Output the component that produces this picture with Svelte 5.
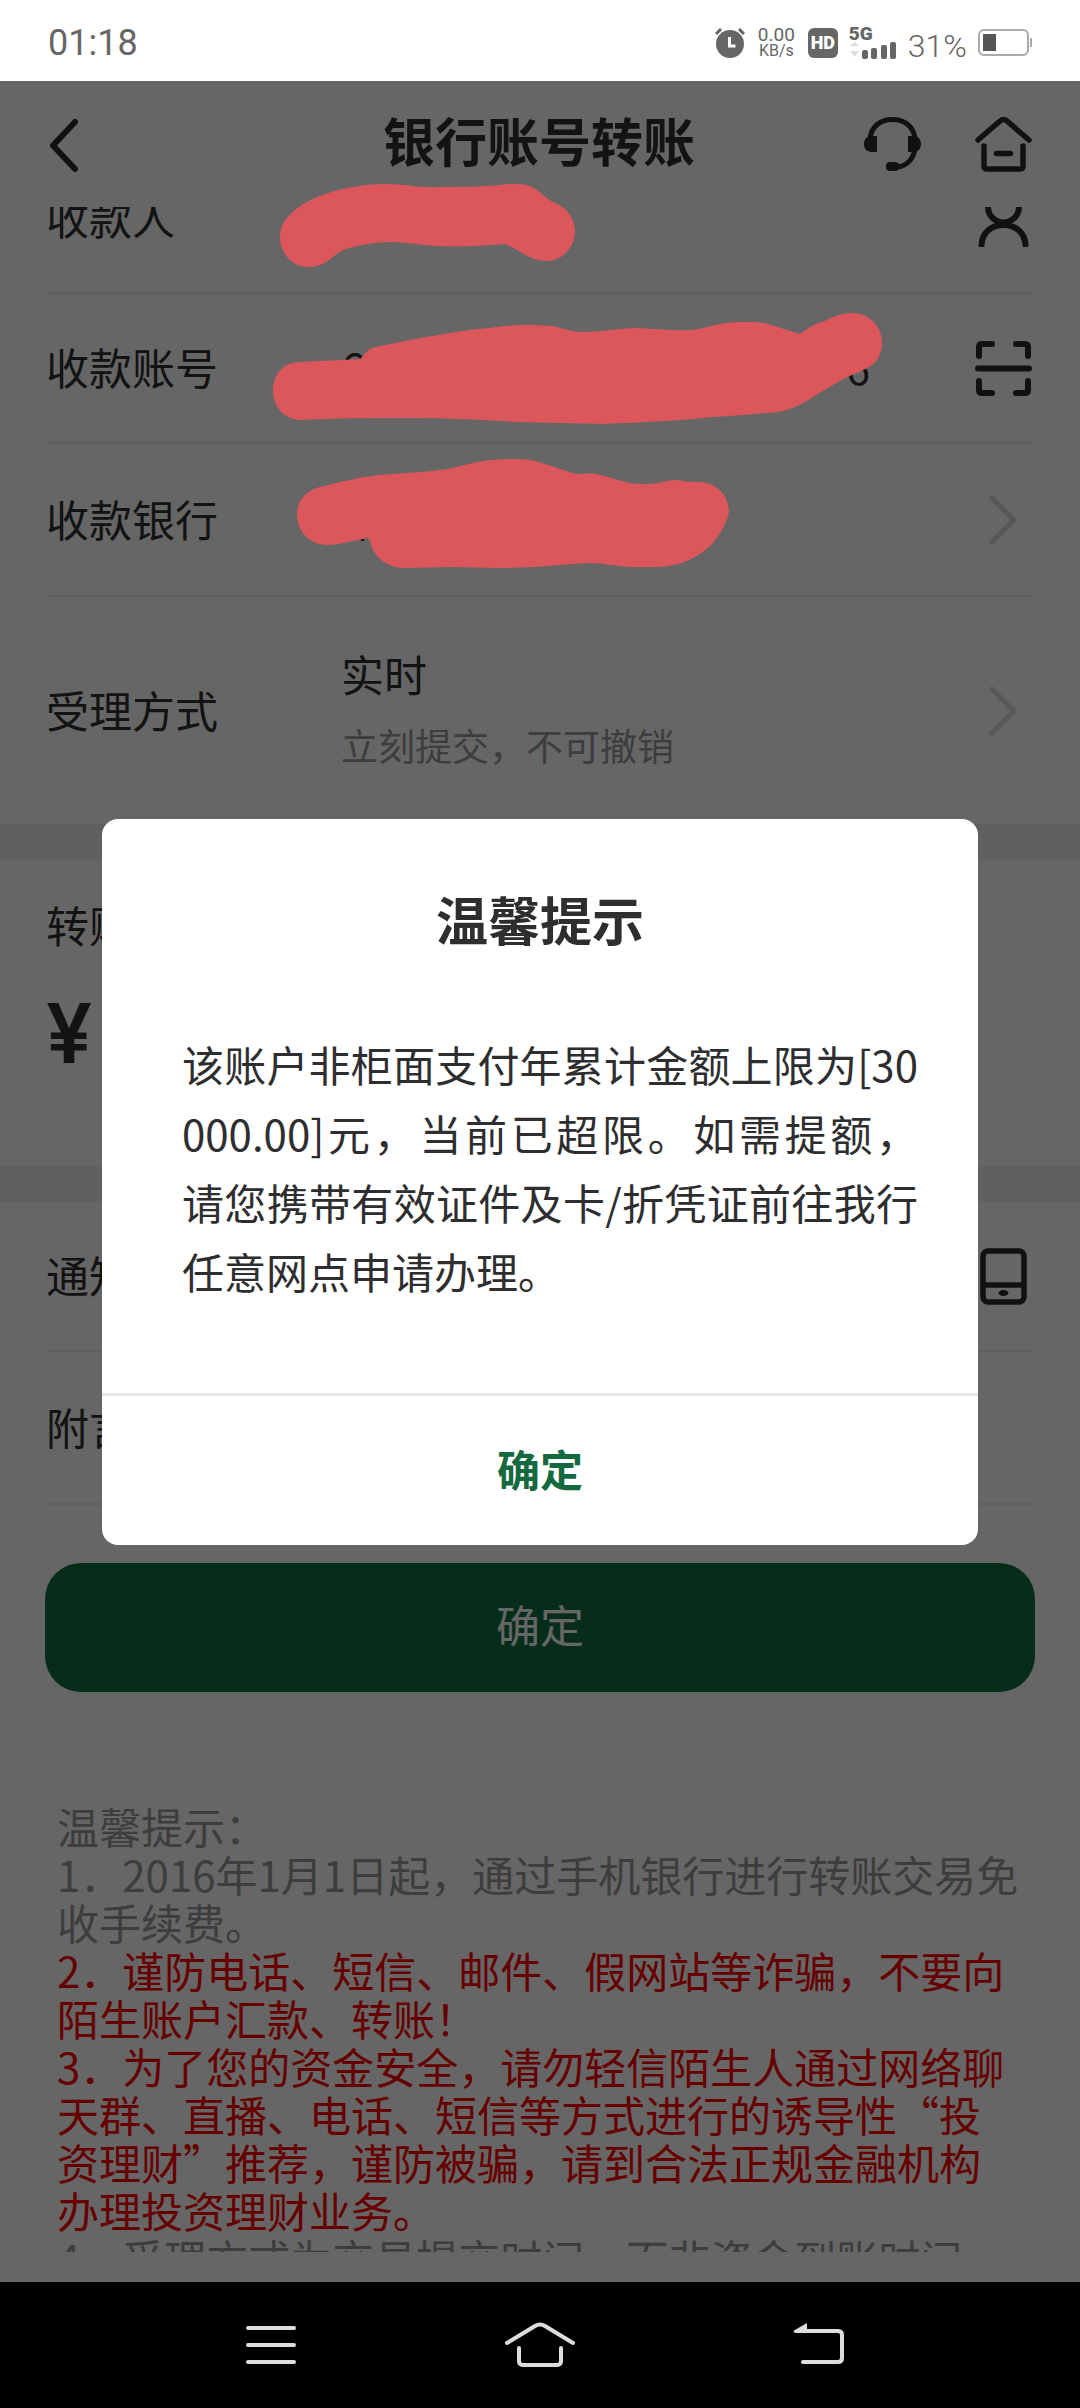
<script lang="ts">
    import { onMount } from "svelte";

    let scroller: HTMLElement;
    let showDialog = $state(true);

    const message = [
        "该账户非柜面支付年累计金额上限为[30",
        "000.00]元，当前已超限。如需提额，",
        "请您携带有效证件及卡/折凭证前往我行",
        "任意网点申请办理。",
    ];

    const tips = [
        { text: "温馨提示：", warn: false },
        { text: "1．2016年1月1日起，通过手机银行进行转账交易免收手续费。", warn: false },
        { text: "2．谨防电话、短信、邮件、假网站等诈骗，不要向陌生账户汇款、转账！", warn: true },
        { text: "3．为了您的资金安全，请勿轻信陌生人通过网络聊天群、直播、电话、短信等方式进行的诱导性“投资理财”推荐，谨防被骗，请到合法正规金融机构办理投资理财业务。", warn: true },
        { text: "4．受理方式为交易提交时间，而非资金到账时间", warn: false },
    ];

    onMount(() => {
        scroller.scrollTop = 63;
    });
</script>

{#snippet chevron()}
    <svg class="icon" viewBox="0 0 57 57" fill="none" stroke="#dcdcdc" stroke-width="5" stroke-linecap="round">
        <path d="M17 7l22 22-22 22" />
    </svg>
{/snippet}

<div class="screen">
    <div class="status">
        <span class="time">01:18</span>
        <div class="status-right">
            <svg class="alarm" viewBox="0 0 30 30" width="30" height="30">
                <circle cx="15" cy="16" r="14" fill="#666" />
                <path d="M1 6l5-5M29 6l-5-5" stroke="#666" stroke-width="3" />
                <path d="M14.500 9v9h6" fill="none" stroke="#fff" stroke-width="3" />
            </svg>
            <div class="speed"><span class="rate">0.00</span><span class="unit">KB/s</span></div>
            <span class="hd">HD</span>
            <div class="signal">
                <span class="net">5G</span>
                <svg viewBox="0 0 48 18" width="48" height="18" fill="#666">
                    <path d="M1 5l4.500-4 4.500 4zM1 10l4.500 6 4.500-6z" fill="#ddd" />
                    <rect x="13" y="9" width="6" height="9" rx="2" />
                    <rect x="22" y="7" width="6" height="11" rx="2" />
                    <rect x="32" y="4" width="6" height="14" rx="2" />
                    <rect x="41" y="1" width="6" height="17" rx="2" />
                </svg>
            </div>
            <span class="percent">31%</span>
            <svg viewBox="0 0 54 28" width="54" height="28">
                <rect x="1" y="1" width="49" height="25" rx="5" fill="none" stroke="#aaa" stroke-width="2" />
                <rect x="5" y="5" width="13" height="17" fill="#555" />
                <rect x="52" y="9" width="2" height="9" fill="#aaa" />
            </svg>
        </div>
    </div>

    <div class="app">
        <header>
            <button class="icon-btn" aria-label="返回">
                <svg class="icon" viewBox="0 0 57 57" fill="none" stroke="#2c2c2c" stroke-width="6" stroke-linecap="round" stroke-linejoin="round">
                    <path d="M29 6L7 29.500 29 53" />
                </svg>
            </button>
            <h1>银行账号转账</h1>
            <div class="actions">
                <button class="icon-btn" aria-label="客服">
                    <svg class="icon" viewBox="0 0 57 57" fill="none" stroke="#2c2c2c" stroke-width="5" stroke-linecap="round">
                        <path d="M6 23C7 11 16 3.500 28.500 3.500S50 11 51 23M51 33c-2 11-9 18-20 18" />
                        <path d="M8 20h5v16H8c-4 0-8-2-8-8s4-8 8-8zM49 20h-5v16h5c4 0 8-2 8-8s-4-8-8-8z" fill="#2c2c2c" stroke="none" />
                        <rect x="22" y="46" width="13" height="9" rx="4" fill="#2c2c2c" stroke="none" />
                    </svg>
                </button>
                <button class="icon-btn" aria-label="首页">
                    <svg class="icon" viewBox="0 0 57 57" fill="none" stroke="#2c2c2c" stroke-width="5.500" stroke-linecap="round" stroke-linejoin="round">
                        <path d="M3 24L25 5q3.500-3 7 0l22 19M9 30v20q0 3 3 3h33q3 0 3-3V30M21.500 37.500h14" />
                    </svg>
                </button>
            </div>
        </header>

        <main bind:this={scroller}>
            <section>
                <div class="row">
                    <span class="label">收款人</span>
                    <svg class="icon" viewBox="0 0 57 57" fill="none" stroke="#2c2c30" stroke-width="6" stroke-linecap="round">
                        <circle cx="28.500" cy="17" r="15.500" />
                        <path d="M6.500 55C7 43 16 35 28.500 35S50 43 50.500 55" />
                    </svg>
                </div>
                <div class="row">
                    <span class="label">收款账号</span>
                    <span class="value account"><span>6</span><span>6</span></span>
                    <svg class="icon" viewBox="0 0 57 57" fill="none" stroke="#2c2c2c" stroke-width="6" stroke-linecap="round" stroke-linejoin="round">
                        <path d="M4 16V7q0-3 3-3h10M41 4h9q3 0 3 3v9M4 41v9q0 3 3 3h10M41 53h9q3 0 3-3v-9M3 28.500h51" />
                    </svg>
                </div>
                <div class="row tall">
                    <span class="label">收款银行</span>
                    <span class="value">中</span>
                    {@render chevron()}
                </div>
                <div class="row method">
                    <span class="label">受理方式</span>
                    <span class="value">实时<small>立刻提交，不可撤销</small></span>
                    {@render chevron()}
                </div>
            </section>

            <section class="amount">
                <span class="label">转账金额</span>
                <span class="yen">¥</span>
            </section>

            <section>
                <div class="row">
                    <span class="label">通知</span>
                    <svg class="icon" viewBox="0 0 57 57" fill="none" stroke="#2c2c30" stroke-width="5.500">
                        <rect x="8" y="3" width="41" height="51" rx="5" />
                        <path d="M8 37h41" />
                        <ellipse cx="28.500" cy="45" rx="5" ry="3" fill="#2c2c30" stroke="none" />
                    </svg>
                </div>
                <div class="row tall lined">
                    <span class="label">附言</span>
                </div>
            </section>

            <button class="submit">确定</button>

            <div class="tips">
                {#each tips as tip}
                    <p class:warn={tip.warn}>{tip.text}</p>
                {/each}
            </div>
        </main>

        {#if showDialog}
            <div class="mask">
                <div class="dialog" role="dialog" aria-modal="true" aria-labelledby="dialog-title">
                    <h2 id="dialog-title">温馨提示</h2>
                    <div class="message">
                        {#each message as line}
                            <p>{line}</p>
                        {/each}
                    </div>
                    <button class="ok" onclick={() => (showDialog = false)}>确定</button>
                </div>
            </div>
        {/if}
    </div>

    <nav>
        <button aria-label="最近任务">
            <svg viewBox="0 0 72 48" width="72" height="48" fill="none" stroke="#ddd" stroke-width="4" stroke-linecap="round">
                <path d="M13 7h46M13 24h46M13 41h46" />
            </svg>
        </button>
        <button aria-label="主屏幕">
            <svg viewBox="0 0 72 48" width="72" height="48" fill="none" stroke="#ddd" stroke-width="4" stroke-linecap="round" stroke-linejoin="round">
                <path d="M3 22L31 5q5-3 10 0l28 17M15 27v13q0 4 5 4h32q5 0 5-4V27" />
            </svg>
        </button>
        <button aria-label="后退">
            <svg viewBox="0 0 72 48" width="72" height="48" fill="none" stroke="#ddd" stroke-width="4" stroke-linecap="round" stroke-linejoin="round">
                <path d="M25 10h40q4 0 4 4v23q0 4-4 4H30" />
                <path d="M21 9.500L34 2v10H22q-2-1-1-2.500z" fill="#ddd" stroke="none" />
            </svg>
        </button>
    </nav>

    <!-- marker strokes hiding the payee details -->
    <svg class="marker" viewBox="260 170 640 410" width="640" height="410" fill="#db575b" aria-hidden="true">
        <path d="M280 237C280 205 335 184 387 184C405 184 418 188 440 187C470 187 490 186 500 185C540 180 536 194 555 203C568 208 575 220 575 231C575 247 562 261 547 261C530 261 520 250 505 244C480 246 460 247 435 246C415 244 400 242 387 242C368 243 350 247 341 251C330 258 325 267 308 267C292 267 280 253 280 237Z" />
        <path d="M273 391C273 374 284 362 299 362L361 359C366 351 370 348 376 347C394 343 410 340 426 337C445 334 460 331 478 329C495 328 507 325 522 325C532 325 542 325 552 326C563 328 570 332 583 332C602 332 620 328 639 328C657 329 675 331 691 330C708 328 724 321 743 322C751 322 757 322 765 323C777 327 788 330 800 334C808 328 816 323 825 321C832 317 842 313 852 313C870 313 882 327 882 342C882 353 878 362 869 367C862 371 854 374 847 377C838 382 830 387 821 392C807 401 795 409 778 412C757 414 735 416 713 417C680 421 640 422 604 424C575 423 546 423 517 422C483 420 448 418 413 418C375 418 338 418 301 420C284 420 273 406 273 391Z" />
        <path d="M297 515C297 501 305 491 320 487C340 482 360 477 379 475C403 473 425 472 448 469C463 466 477 461 491 460C506 459 521 458 535 461C550 465 562 470 576 474C583 474 589 473 596 474C607 476 616 480 626 482C633 484 640 484 648 484C658 484 666 480 676 480C681 480 685 482 691 482C715 479 729 495 729 512C727 523 720 534 713 543C704 552 690 562 674 565C660 568 645 567 630 567C616 566 602 563 587 563C558 565 530 568 500 568C484 568 468 567 452 567C436 567 421 568 405 568C385 568 372 555 370 540L368 538C355 540 340 545 327 545C309 545 297 530 297 515Z" />
    </svg>
</div>

<style>
    :global(body) {
        background: #000;
    }

    .screen {
        position: relative;
        display: flex;
        flex-direction: column;
        height: 100vh;
        font-family: "Noto Sans CJK SC", sans-serif;
        font-size: 43px;
        color: #303030;
    }

    h1, h2, p {
        margin: 0;
    }

    button {
        padding: 0;
        border: 0;
        background: none;
        font-family: inherit;
        cursor: pointer;
    }

    svg {
        display: block;
        flex: none;
    }

    .status {
        display: flex;
        justify-content: space-between;
        align-items: center;
        height: 81px;
        padding: 4px 48px 0;
        box-sizing: border-box;
        background: #fff;
        color: #666;
        font-family: Roboto, sans-serif;
    }

    .time {
        font-size: 36px;
    }

    .status-right {
        display: flex;
        align-items: center;
        gap: 11px;
    }

    .speed {
        display: flex;
        flex-direction: column;
        align-items: center;
        margin: 0 2px;
    }

    .rate {
        font-size: 19px;
        line-height: 16px;
    }

    .unit {
        font-size: 16px;
        line-height: 16px;
    }

    .hd {
        width: 30px;
        border-radius: 6px;
        background: #666;
        color: #fff;
        font-size: 18px;
        font-weight: 900;
        line-height: 30px;
        text-align: center;
    }

    .signal {
        display: flex;
        flex-direction: column;
    }

    .net {
        font-size: 19px;
        font-weight: 900;
        line-height: 14px;
    }

    .percent {
        padding-top: 6px;
        font-size: 32px;
        font-weight: 300;
    }

    .app {
        position: relative;
        display: flex;
        flex-direction: column;
        flex: 1;
        min-height: 0;
        padding-bottom: 30px;
        background: #fff;
    }

    header {
        display: grid;
        grid-template-columns: 1fr auto 1fr;
        align-items: center;
        height: 126px;
        padding: 0 48px 0 46px;
        flex: none;
    }

    h1 {
        padding-bottom: 8px;
        font-size: 52px;
        line-height: 60px;
    }

    .icon-btn {
        justify-self: start;
    }

    .icon {
        width: 57px;
        height: 57px;
    }

    .actions {
        display: flex;
        justify-content: flex-end;
        gap: 54px;
    }

    main {
        flex: 1;
        min-height: 0;
        overflow-y: auto;
        scrollbar-width: none;
    }

    section {
        padding: 0 48px 0 46px;
        border-bottom: 36px solid #f0f0f5;
    }

    section:last-of-type {
        border-bottom: 0;
    }

    .row {
        display: flex;
        align-items: center;
        justify-content: space-between;
        height: 150px;
        box-sizing: border-box;
        border-bottom: 2px solid #eee;
    }

    .row.tall {
        height: 153px;
    }

    .row.method {
        height: 227px;
    }

    .row:last-child:not(.lined) {
        border-bottom: 0;
    }

    .label {
        width: 295px;
        padding-bottom: 4px;
        line-height: 60px;
    }

    .value {
        flex: 1;
        padding-bottom: 4px;
        line-height: 72px;
    }

    .account {
        display: flex;
        justify-content: space-between;
        padding-right: 105px;
    }

    small {
        display: block;
        color: #999;
        font-size: 37px;
    }

    .amount {
        display: flex;
        flex-direction: column;
        gap: 26px;
        padding-top: 34px;
        padding-bottom: 82px;
    }

    .yen {
        font-family: Inter, sans-serif;
        font-size: 82px;
        font-weight: 600;
        line-height: 100px;
    }

    .submit {
        display: block;
        width: calc(100% - 90px);
        margin: 58px 45px 110px;
        padding-bottom: 6px;
        border-radius: 36px;
        background: #0f7041;
        color: #fff;
        font-size: 44px;
        line-height: 123px;
    }

    .tips {
        padding: 0 60px 0 57px;
        color: #999;
        font-size: 42px;
        line-height: 48px;
    }

    .warn {
        color: #f00;
    }

    .mask {
        position: absolute;
        inset: 0;
        display: flex;
        align-items: center;
        justify-content: center;
        padding: 0 102px;
        background: rgba(0, 0, 0, 0.6);
    }

    .dialog {
        flex: 1;
        overflow: hidden;
        border-radius: 16px;
        background: #fff;
        color: #2e2e30;
    }

    h2 {
        padding-top: 68px;
        font-size: 52px;
        line-height: 64px;
        text-align: center;
    }

    .message {
        padding: 78px 60px 88px 80px;
        font-size: 42px;
        line-height: 69px;
    }

    .message p {
        text-align-last: justify;
    }

    .message p:last-child {
        text-align-last: left;
    }

    .ok {
        display: block;
        width: 100%;
        padding-bottom: 4px;
        border-top: 3px solid #e8e8e8;
        color: #14693f;
        font-size: 43px;
        font-weight: 700;
        line-height: 145px;
    }

    nav {
        display: flex;
        justify-content: space-around;
        align-items: center;
        height: 126px;
        padding: 0 136px;
        flex: none;
        background: #000;
    }

    .marker {
        position: absolute;
        top: 170px;
        left: 260px;
        pointer-events: none;
    }
</style>
